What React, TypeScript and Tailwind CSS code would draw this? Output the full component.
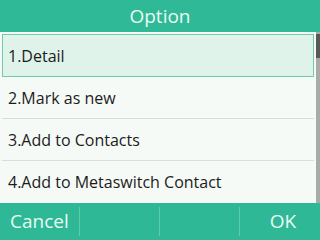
import React from "react";

const items = ["1.Detail", "2.Mark as new", "3.Add to Contacts", "4.Add to Metaswitch Contact"];

export default function App() {
  return (
    <div
      className="w-[320px] h-[240px] flex flex-col bg-[#f6faf7] overflow-hidden"
      style={{ fontFamily: '"Open Sans", "Noto Sans", sans-serif' }}
    >
      <div className="h-[32px] bg-[#30b996] flex items-center justify-center text-[19px] text-[#e8fbf4] leading-none">
        Option
      </div>
      <div className="flex-1 flex">
        <div className="flex-1 flex flex-col pt-[2px] pl-[2px]">
          <div className="h-[43px] border border-[#72c9b2] bg-[#dff3ea] flex items-center pl-[5px] text-[16px] text-[#1c1c1c]">
            {items[0]}
          </div>
          {items.slice(1).map((t, i) => (
            <div
              key={t}
              className={`h-[42px] flex items-center pl-[6px] text-[16px] text-[#1c1c1c] ${i < 2 ? "border-b border-[#d9dedb]" : ""}`}
            >
              {t}
            </div>
          ))}
        </div>
        <div className="w-[4px] ml-[2px] bg-[#a9aba9] flex flex-col pt-[2px]">
          <div className="h-[24px] bg-[#585a58]" />
        </div>
      </div>
      <div className="h-[37px] bg-[#2fb895] flex text-[19px] text-[#e8fbf4] leading-none">
        <div className="w-[80px] flex items-center pl-[10px] border-r border-[#5dcaae] my-[4px]">Cancel</div>
        <div className="w-[80px] border-r border-[#5dcaae] my-[4px]" />
        <div className="w-[80px] border-r border-[#5dcaae] my-[4px]" />
        <div className="w-[80px] flex items-center justify-center pl-[6px]">OK</div>
      </div>
    </div>
  );
}
